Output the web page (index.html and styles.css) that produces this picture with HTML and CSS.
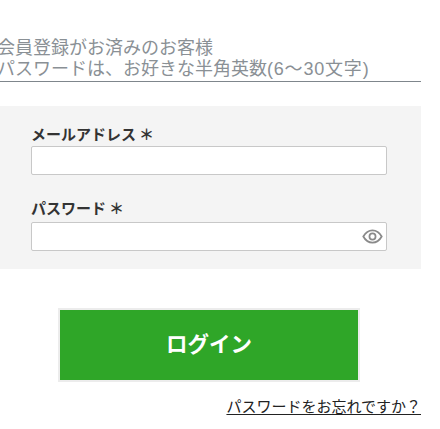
FILE: index.html
```html
<!DOCTYPE html>
<html lang="ja">
<head>
  <meta charset="UTF-8" />
  <meta name="viewport" content="width=device-width, initial-scale=1" />
  <title>ログイン</title>
  <link rel="stylesheet" href="styles.css">
</head>
<body>
  <div class="container">
    <div class="login-head">
      <div class="login-title">会員登録がお済みのお客様</div>
      <div class="login-note">パスワードは、お好きな半角英数<span class="note-range">(6～30文字)</span></div>
    </div>

    <form class="login-form">
      <div class="field">
        <label class="field-label">メールアドレス<span class="required">＊</span></label>
        <div class="field-box"></div>
      </div>
      <div class="field field-password">
        <label class="field-label">パスワード<span class="required">＊</span></label>
        <div class="field-box">
          <svg class="eye-icon" viewBox="0 0 24 24">
            <path fill="none" stroke="#8a8a8a" stroke-width="2" d="M1.5 12C4 7.5 7.8 5 12 5s8 2.5 10.5 7c-2.5 4.500-6.300 7-10.500 7S4 16.500 1.500 12z" />
            <circle fill="none" stroke="#8a8a8a" stroke-width="2" cx="12" cy="12" r="3.500" />
          </svg>
        </div>
      </div>
    </form>

    <div class="login-action">
      <button class="login-button" type="button">ログイン</button>
    </div>
    <div class="forgot">
      <a class="forgot-link" href="#">パスワードをお忘れですか？</a>
    </div>
  </div>
</body>
</html>
```

FILE: styles.css
```css
html, body {
  overflow: hidden;
}

body {
  margin: 0;
  background: #fff;
  font-family: "Liberation Sans", "Noto Sans CJK JP", sans-serif;
  color: #333;
}

.container {
  width: 421px;
  padding-top: 38px;
}

.login-head {
  height: 43px;
  border-bottom: 1px solid #7f868c;
  font-size: 18px;
  line-height: 21px;
  color: #8a9095;
  white-space: nowrap;
}

.login-title,
.login-note {
  margin-left: -3px;
}

.note-range {
  letter-spacing: 0.8px;
}

.login-form {
  margin-top: 24px;
  padding: 18px 34px 18px 31px;
  background: #f4f4f4;
}

.field-label {
  display: block;
  height: 22px;
  font-size: 15px;
  line-height: 22px;
  font-weight: bold;
}

.field-password {
  margin-top: 22px;
}

.field-password .field-label {
  height: 25px;
  line-height: 24px;
}

.required {
  margin-left: 3px;
  font-size: 15px;
}

.field-box {
  display: flex;
  align-items: center;
  justify-content: flex-end;
  box-sizing: border-box;
  height: 29px;
  padding-right: 3px;
  background: #fff;
  border: 1px solid #c8c8c8;
  border-radius: 2px;
}

.eye-icon {
  width: 21px;
  height: 21px;
}

.login-action {
  display: flex;
  justify-content: center;
  margin-top: 39px;
  padding-right: 3px;
}

.login-button {
  width: 302px;
  height: 74px;
  padding-bottom: 6px;
  background: #2fa628;
  border: 2px solid #ececec;
  color: #fff;
  font-family: inherit;
  font-size: 21.500px;
  font-weight: bold;
}

.forgot {
  margin-top: 14px;
  text-align: right;
}

.forgot-link {
  font-size: 15px;
  line-height: 22px;
  color: #222;
  text-decoration: underline;
  text-decoration-skip-ink: none;
  text-underline-offset: 2px;
}
```
